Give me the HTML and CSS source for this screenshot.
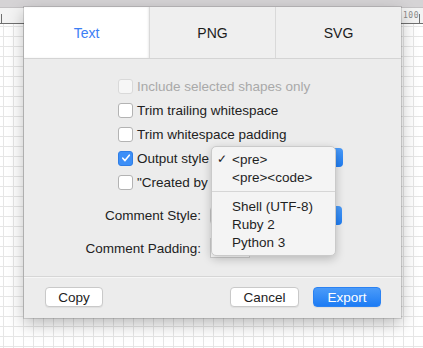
FILE: index.html
```html
<!DOCTYPE html>
<html lang="en">
<head>
    <meta charset="UTF-8">
    <meta name="viewport" content="width=device-width, initial-scale=1.0">
    <title>Export</title>
    <link rel="stylesheet" href="styles.css">
</head>
<body>

    <div class="titlebar"></div>
    <div class="ruler">
        <span class="tick tick-left"></span>
        <span class="ruler-label">100</span>
        <span class="tick tick-right"></span>
    </div>
    <div class="canvas"></div>

    <div class="dialog">
        <div class="tabs">
            <div class="tab active">Text</div>
            <div class="tab">PNG</div>
            <div class="tab">SVG</div>
        </div>

        <div class="options">
            <label class="check-row disabled"><span class="box"></span>Include selected shapes only</label>
            <label class="check-row"><span class="box"></span>Trim trailing whitespace</label>
            <label class="check-row"><span class="box"></span>Trim whitespace padding</label>
            <label class="check-row"><span class="box checked"><svg width="10" height="10" viewBox="0 0 10 10"><path d="M1.8 5.2 L4 7.6 L8.3 2.2" fill="none" stroke="#fff" stroke-width="1.6" stroke-linecap="round" stroke-linejoin="round"/></svg></span>Output style<span class="popup output-popup"><span class="stepper"></span></span></label>
            <label class="check-row"><span class="box"></span>"Created by</label>

            <div class="form-row first">
                <span class="form-label">Comment Style:</span>
                <span class="popup"><span class="stepper"></span></span>
            </div>
            <div class="form-row">
                <span class="form-label">Comment Padding:</span>
                <span class="field"></span>
            </div>

            <div class="menu">
                <div class="menu-item"><span class="mark">✓</span>&lt;pre&gt;</div>
                <div class="menu-item"><span class="mark"></span>&lt;pre&gt;&lt;code&gt;</div>
                <div class="menu-sep"></div>
                <div class="menu-item"><span class="mark"></span>Shell (UTF-8)</div>
                <div class="menu-item"><span class="mark"></span>Ruby 2</div>
                <div class="menu-item"><span class="mark"></span>Python 3</div>
            </div>
        </div>

        <div class="footer">
            <button class="btn copy-btn">Copy</button>
            <div class="spacer"></div>
            <button class="btn cancel-btn">Cancel</button>
            <button class="btn export-btn">Export</button>
        </div>
    </div>

</body>
</html>
```

FILE: styles.css
```css
body {
    font-family: 'Liberation Sans', Arial, sans-serif;
    margin: 0;
    padding: 0;
    width: 423px;
    height: 348px;
    overflow: hidden;
    background-color: #ffffff;
    position: relative;
}
.titlebar {
    height: 7px;
    background-color: #d5d3d5;
    border-bottom: 1px solid #c4c2c4;
}
.ruler {
    height: 15px;
    background-color: #f3f3f3;
    border-bottom: 1px solid #6f6f6f;
    position: relative;
}
.tick {
    position: absolute;
    bottom: 0;
    width: 1px;
    height: 9px;
    background-color: #6f6f6f;
}
.tick-left {
    left: 1px;
}
.tick-right {
    left: 419px;
}
.ruler-label {
    position: absolute;
    left: 403px;
    top: 3px;
    font-family: 'DejaVu Sans Mono', monospace;
    font-size: 8px;
    color: #8a8a8a;
    letter-spacing: 0.5px;
}
.canvas {
    height: 324px;
    background-color: #ffffff;
    background-image:
        linear-gradient(to right, #e6e6e6 1px, transparent 1px),
        linear-gradient(to bottom, #e6e6e6 1px, transparent 1px);
    background-size: 10px 10px;
    background-position: 3px 2px;
}

/* export sheet */
.dialog {
    position: absolute;
    left: 24px;
    top: 7px;
    width: 377px;
    height: 311px;
    background-color: #ececec;
    box-shadow: 0 6px 16px rgba(0, 0, 0, 0.28), 0 0 0 1px rgba(0, 0, 0, 0.12);
    display: flex;
    flex-direction: column;
}
.tabs {
    height: 51px;
    display: grid;
    grid-template-columns: 125px 126px 126px;
    border-bottom: 1px solid #d4d4d4;
}
.tab {
    display: flex;
    align-items: center;
    justify-content: center;
    font-size: 14px;
    color: #1c1c1c;
    background-color: #efefef;
    border-left: 1px solid #d9d9d9;
}
.tab.active {
    background-color: #ffffff;
    color: #3b7ef5;
    border-left: none;
    box-shadow: inset -1px 0 2px rgba(0, 0, 0, 0.08);
}
.options {
    flex: 1;
    position: relative;
    padding-top: 15px;
    border-bottom: 1px solid #d6d6d6;
}
.check-row {
    display: flex;
    align-items: center;
    height: 24px;
    padding-left: 94px;
    font-size: 13.5px;
    color: #222;
}
.check-row.disabled {
    color: #a9a9a9;
}
.box {
    width: 13px;
    height: 13px;
    border: 1px solid #b3b3b3;
    border-radius: 3px;
    background-color: #ffffff;
    margin-right: 4px;
    display: flex;
    align-items: center;
    justify-content: center;
    box-sizing: content-box;
}
.disabled .box {
    border-color: #d9d9d9;
    background-color: #f6f6f6;
}
.box.checked {
    background-color: #3d8ff7;
    border-color: #2f7ee6;
}
.popup {
    width: 132px;
    height: 19px;
    background-color: #ffffff;
    border: 1px solid #c4c4c4;
    border-radius: 4px;
    box-sizing: border-box;
    position: relative;
}
.output-popup {
    position: absolute;
    left: 187px;
    top: 89px;
}
.stepper {
    position: absolute;
    right: -1px;
    top: -1px;
    width: 10px;
    height: 19px;
    background: linear-gradient(#4a9bf9, #1f7df3);
    border-radius: 0 4px 4px 0;
}
.form-row {
    display: grid;
    grid-template-columns: 177px auto;
    column-gap: 10px;
    align-items: center;
    height: 19px;
}
.form-row.first {
    margin-top: 12px;
}
.form-row + .form-row {
    margin-top: 13px;
}
.form-label {
    text-align: right;
    font-size: 13.5px;
    color: #222;
}
.form-row .popup {
    margin-left: -1px;
}
.field {
    width: 40px;
    height: 20px;
    margin-left: -1px;
    background-color: #ffffff;
    border: 1px solid #cfcfcf;
    box-sizing: border-box;
}

/* open popup menu */
.menu {
    position: absolute;
    left: 187px;
    top: 87px;
    width: 125px;
    box-sizing: border-box;
    padding: 3px 0 4px;
    background-color: #f4f4f4;
    border: 1px solid #cacaca;
    border-radius: 5px;
    box-shadow: 0 3px 10px rgba(0, 0, 0, 0.22);
}
.menu-item {
    display: flex;
    align-items: center;
    height: 18px;
    font-size: 13.5px;
    color: #1f1f1f;
}
.mark {
    width: 20px;
    padding-left: 5px;
    box-sizing: border-box;
    font-size: 12px;
}
.menu-sep {
    height: 1px;
    background-color: #d6d6d6;
    margin: 5px 0 5px;
}
.footer {
    height: 41px;
    display: flex;
    align-items: center;
    padding: 0 20px 2px 21px;
    gap: 14px;
    box-sizing: border-box;
    border-top: 1px solid #f6f6f6;
}
.spacer {
    flex: 1;
}
.btn {
    font-family: 'Liberation Sans', Arial, sans-serif;
    height: 20px;
    font-size: 13.5px;
    color: #1e1e1e;
    background-color: #ffffff;
    border: 1px solid #c9c9c9;
    border-radius: 4px;
    padding: 0;
    box-shadow: 0 1px 1px rgba(0, 0, 0, 0.06);
}
.copy-btn {
    width: 58px;
}
.cancel-btn {
    width: 69px;
}
.export-btn {
    width: 68px;
    color: #ffffff;
    border-color: #2b82f2;
    background: linear-gradient(#4b9bf9, #1d7cf4);
}
```
